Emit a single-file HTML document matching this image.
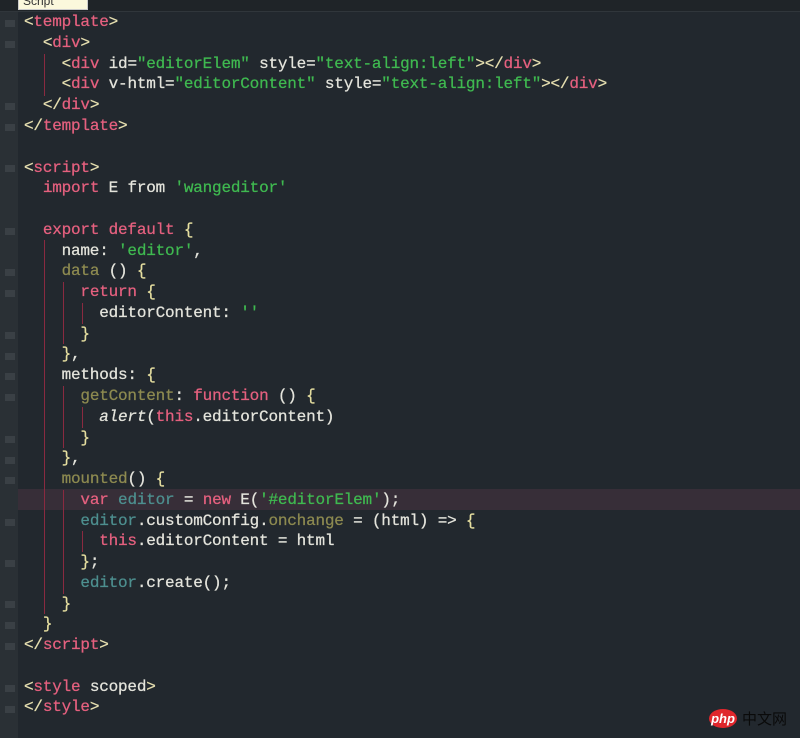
<!DOCTYPE html>
<html><head><meta charset="utf-8"><style>
body{margin:0;width:800px;height:738px;background:#22282e;overflow:hidden;position:relative;font-family:"Liberation Mono",monospace;}
.top{position:absolute;left:0;top:0;width:800px;height:11px;background:#1f2428;border-bottom:1px solid #30363b;}
.tip{position:absolute;left:18px;top:-6px;width:64px;height:14px;background:#fbf8dc;border:1px solid #ccc;font:12px "Liberation Sans",sans-serif;color:#333;padding-left:4px;line-height:12px;}
.gut{position:absolute;left:0;top:12px;width:18px;height:726px;background:#2a3035;}
.code{position:absolute;left:24px;top:12.2px;font-size:16px;letter-spacing:-0.2px;line-height:20.76px;white-space:pre;color:#e4e4dc;-webkit-text-stroke:0.25px currentColor;}
.hl{position:absolute;left:18px;top:489px;width:782px;height:21px;background:#372e38;}
.t{color:#e5607f}.b{color:#e6dfb0}.s{color:#3fb950}.k{color:#e5607f}.p{color:#8d8a50}.v{color:#4d8f8f}.n{color:#e6dfa0}
.g{position:absolute;width:1px;background:#8a2a40;}
.f{position:absolute;left:5px;width:10px;height:7px;background:#3a4045;}
.logo{position:absolute;left:709px;top:709px;width:28px;height:19px;border-radius:50%;background:#e0262c;color:#fff;font:bold italic 13px "Liberation Sans",sans-serif;text-align:center;line-height:19px;}
.cn{position:absolute;left:742px;top:708px;font:15px "Noto Sans CJK SC",sans-serif;color:#0a0a0a;}
</style></head><body>
<div class="top"></div><div class="tip">Script</div>
<div class="gut"></div>
<div class="f" style="top:20px"></div><div class="f" style="top:41px"></div><div class="f" style="top:103px"></div><div class="f" style="top:124px"></div>
<div class="f" style="top:165px"></div><div class="f" style="top:228px"></div><div class="f" style="top:269px"></div><div class="f" style="top:290px"></div>
<div class="f" style="top:332px"></div><div class="f" style="top:353px"></div><div class="f" style="top:373px"></div><div class="f" style="top:394px"></div>
<div class="f" style="top:436px"></div><div class="f" style="top:457px"></div><div class="f" style="top:477px"></div><div class="f" style="top:519px"></div>
<div class="f" style="top:560px"></div><div class="f" style="top:601px"></div><div class="f" style="top:622px"></div><div class="f" style="top:643px"></div>
<div class="f" style="top:685px"></div><div class="f" style="top:706px"></div>
<div class="hl"></div>
<div class="g" style="left:44px;top:54px;height:42px"></div>
<div class="g" style="left:44px;top:240px;height:374px"></div>
<div class="g" style="left:63px;top:282px;height:62px"></div>
<div class="g" style="left:82px;top:303px;height:21px"></div>
<div class="g" style="left:63px;top:386px;height:62px"></div>
<div class="g" style="left:82px;top:407px;height:21px"></div>
<div class="g" style="left:63px;top:490px;height:104px"></div>
<div class="g" style="left:82px;top:531px;height:21px"></div>
<div class="code"><span class="b">&lt;</span><span class="t">template</span><span class="b">&gt;</span>
  <span class="b">&lt;</span><span class="t">div</span><span class="b">&gt;</span>
    <span class="b">&lt;</span><span class="t">div</span> id=<span class="s">"editorElem"</span> style=<span class="s">"text-align:left"</span><span class="b">&gt;&lt;/</span><span class="t">div</span><span class="b">&gt;</span>
    <span class="b">&lt;</span><span class="t">div</span> v-html=<span class="s">"editorContent"</span> style=<span class="s">"text-align:left"</span><span class="b">&gt;&lt;/</span><span class="t">div</span><span class="b">&gt;</span>
  <span class="b">&lt;/</span><span class="t">div</span><span class="b">&gt;</span>
<span class="b">&lt;/</span><span class="t">template</span><span class="b">&gt;</span>

<span class="b">&lt;</span><span class="t">script</span><span class="b">&gt;</span>
  <span class="k">import</span> E from <span class="s">'wangeditor'</span>

  <span class="k">export default</span> <span class="n">{</span>
    name: <span class="s">'editor'</span>,
    <span class="p">data</span> () <span class="n">{</span>
      <span class="k">return</span> <span class="n">{</span>
        editorContent: <span class="s">''</span>
      <span class="n">}</span>
    <span class="n">}</span>,
    methods: <span class="n">{</span>
      <span class="p">getContent</span>: <span class="k">function</span> () <span class="n">{</span>
        <i>alert</i>(<span class="k">this</span>.editorContent)
      <span class="n">}</span>
    <span class="n">}</span>,
    <span class="p">mounted</span>() <span class="n">{</span>
      <span class="k">var</span> <span class="v">editor</span> = <span class="k">new</span> E(<span class="s">'#editorElem'</span>);
      <span class="v">editor</span>.customConfig.<span class="p">onchange</span> = (html) =&gt; <span class="n">{</span>
        <span class="k">this</span>.editorContent = html
      <span class="n">}</span>;
      <span class="v">editor</span>.create();
    <span class="n">}</span>
  <span class="n">}</span>
<span class="b">&lt;/</span><span class="t">script</span><span class="b">&gt;</span>

<span class="b">&lt;</span><span class="t">style</span> scoped<span class="b">&gt;</span>
<span class="b">&lt;/</span><span class="t">style</span><span class="b">&gt;</span></div>
<div class="logo">php</div><div class="cn">中文网</div>
</body></html>
